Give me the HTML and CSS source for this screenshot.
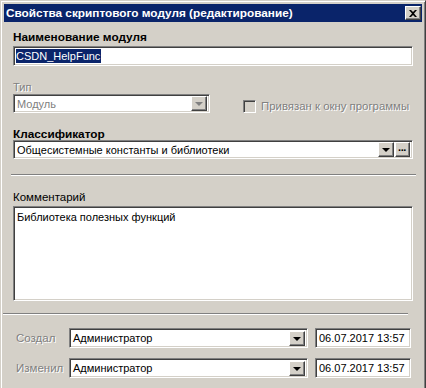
FILE: index.html
```html
<!DOCTYPE html>
<html lang="ru">
<head>
  <meta charset="UTF-8">
  <title>Свойства скриптового модуля</title>
  <link rel="stylesheet" href="styles.css">
</head>
<body>
  <div id="dialog">
    <div id="caption">
      <span>Свойства скриптового модуля (редактирование)</span>
      <div class="btn" id="close">
        <svg width="8" height="7" viewBox="0 0 8 7"><path d="M0 0h2l2 2 2-2h2L5 3.5 8 7H6L4 5 2 7H0l3-3.5z" fill="#000"/></svg>
      </div>
    </div>

    <div id="content">
      <div class="label bold" id="name-label">Наименование модуля</div>
      <div class="field sunken" id="name"><span class="selected">CSDN_HelpFunc</span></div>

      <div class="label disabled" id="type-label">Тип</div>
      <div id="type-row">
        <div class="field sunken combo" id="type">
          <span class="value disabled-text">Модуль</span>
          <div class="btn arrow"><i class="tri grey"></i></div>
        </div>
        <div id="bind">
          <div class="check sunken"></div>
          <span class="disabled">Привязан к окну программы</span>
        </div>
      </div>

      <div class="label bold" id="class-label">Классификатор</div>
      <div class="field sunken combo" id="classifier">
        <span class="value">Общесистемные константы и библиотеки</span>
        <div class="btn arrow"><i class="tri"></i></div>
        <div class="btn dots">&middot;&middot;&middot;</div>
      </div>

      <div class="sep" id="sep1"></div>

      <div class="label" id="comment-label">Комментарий</div>
      <div class="field sunken" id="comment">Библиотека полезных функций</div>

      <div class="sep" id="sep2"></div>

      <div class="meta-row" id="created">
        <span class="meta-label disabled">Создал</span>
        <div class="field sunken combo user">
          <span class="value">Администратор</span>
          <div class="btn arrow"><i class="tri"></i></div>
        </div>
        <div class="field sunken date">06.07.2017 13:57</div>
      </div>
      <div class="meta-row" id="changed">
        <span class="meta-label disabled">Изменил</span>
        <div class="field sunken combo user">
          <span class="value">Администратор</span>
          <div class="btn arrow"><i class="tri"></i></div>
        </div>
        <div class="field sunken date">06.07.2017 13:57</div>
      </div>
    </div>
  </div>
</body>
</html>
```

FILE: styles.css
```css
html, body {
  margin: 0;
  padding: 0;
  background: #d4d0c8;
}

#dialog {
  width: 426px;
  height: 388px;
  box-sizing: border-box;
  background: #d4d0c8;
  border-top: 1px solid #d4d0c8;
  border-left: 1px solid #d4d0c8;
  border-right: 1px solid #404040;
  padding: 3px 3px 0 3px;
  box-shadow: inset 1px 1px #fff, inset -1px 0 #808080;
  font-family: "Liberation Sans", Arial, sans-serif;
  font-size: 11px;
  color: #000;
  overflow: hidden;
}

#caption {
  height: 18px;
  background: #0a246a;
  color: #fff;
  font-weight: bold;
  font-size: 11.8px;
  display: flex;
  align-items: center;
  justify-content: space-between;
  padding: 0 1px 0 2px;
}

.btn {
  background: #d4d0c8;
  box-sizing: border-box;
  border: 1px solid;
  border-color: #fff #404040 #404040 #fff;
  box-shadow: inset -1px -1px #808080, inset 1px 1px #d4d0c8;
  display: flex;
  align-items: center;
  justify-content: center;
}

#close {
  width: 16px;
  height: 14px;
}

#content {
  padding: 0 9px;
}

.label {
  height: 14px;
  line-height: 14px;
}

.bold {
  font-weight: bold;
  font-size: 11.8px;
}

.disabled {
  color: #808080;
  text-shadow: 1px 1px #fff;
}

.disabled-text {
  color: #808080;
}

.sunken {
  box-sizing: border-box;
  border: 1px solid;
  border-color: #808080 #fff #fff #808080;
  box-shadow: inset 1px 1px #404040, inset -1px -1px #d4d0c8;
  background: #fff;
}

.field {
  font-size: 11px;
  height: 20px;
  line-height: 16px;
  padding: 0 2px;
  display: flex;
  align-items: center;
  white-space: nowrap;
}

#name-label { margin-top: 8px; }
#name { margin-top: 2px; }

.selected {
  background: #0a246a;
  color: #fff;
  line-height: 14px;
  padding: 0 1px 0 0;
}

#type-label { margin-top: 14px; }

#type-row {
  height: 19px;
  display: flex;
  align-items: center;
}

#type {
  width: 197px;
  height: 19px;
  flex-shrink: 0;
}

.combo {
  padding: 0 2px 0 3px;
}

.combo .value {
  flex: 1;
}

.arrow {
  width: 16px;
  height: 15px;
}

.tri {
  display: block;
  width: 0;
  height: 0;
  border-left: 4px solid transparent;
  border-right: 4px solid transparent;
  border-top: 4px solid #000;
  margin-top: 1px;
}

.tri.grey {
  border-top-color: #808080;
}

#bind {
  display: flex;
  align-items: center;
  margin-left: 33px;
  margin-top: 5px;
  gap: 5px;
  font-size: 11.4px;
  white-space: nowrap;
}

.check {
  width: 13px;
  height: 13px;
  flex-shrink: 0;
  background: #d4d0c8;
}

#class-label { margin-top: 14px; }

#classifier {
  margin-top: -1px;
  height: 19px;
  padding-right: 2px;
}

.dots {
  width: 15px;
  height: 15px;
  margin-left: 1px;
  font-weight: bold;
  font-size: 11px;
  letter-spacing: -1px;
  padding-right: 1px;
}

.sep {
  height: 0;
  border-top: 1px solid #808080;
  border-bottom: 1px solid #fff;
}

#sep1 {
  margin: 15px -3px 0 -2px;
}

#comment-label {
  margin-top: 14px;
  font-size: 11.5px;
}

#comment {
  margin-top: 2px;
  height: 95px;
  align-items: flex-start;
  padding: 2px 3px;
}

#sep2 {
  margin: 12px 5px 0 -10px;
}

.meta-row {
  display: flex;
  align-items: center;
  height: 20px;
}

#created { margin-top: 13px; }
#changed { margin-top: 10px; }

.meta-label {
  width: 53px;
  padding-left: 3px;
  font-size: 11.5px;
}

.user {
  width: 239px;
}

.date {
  width: 96px;
  margin-left: 7px;
  padding-left: 3px;
}
```
